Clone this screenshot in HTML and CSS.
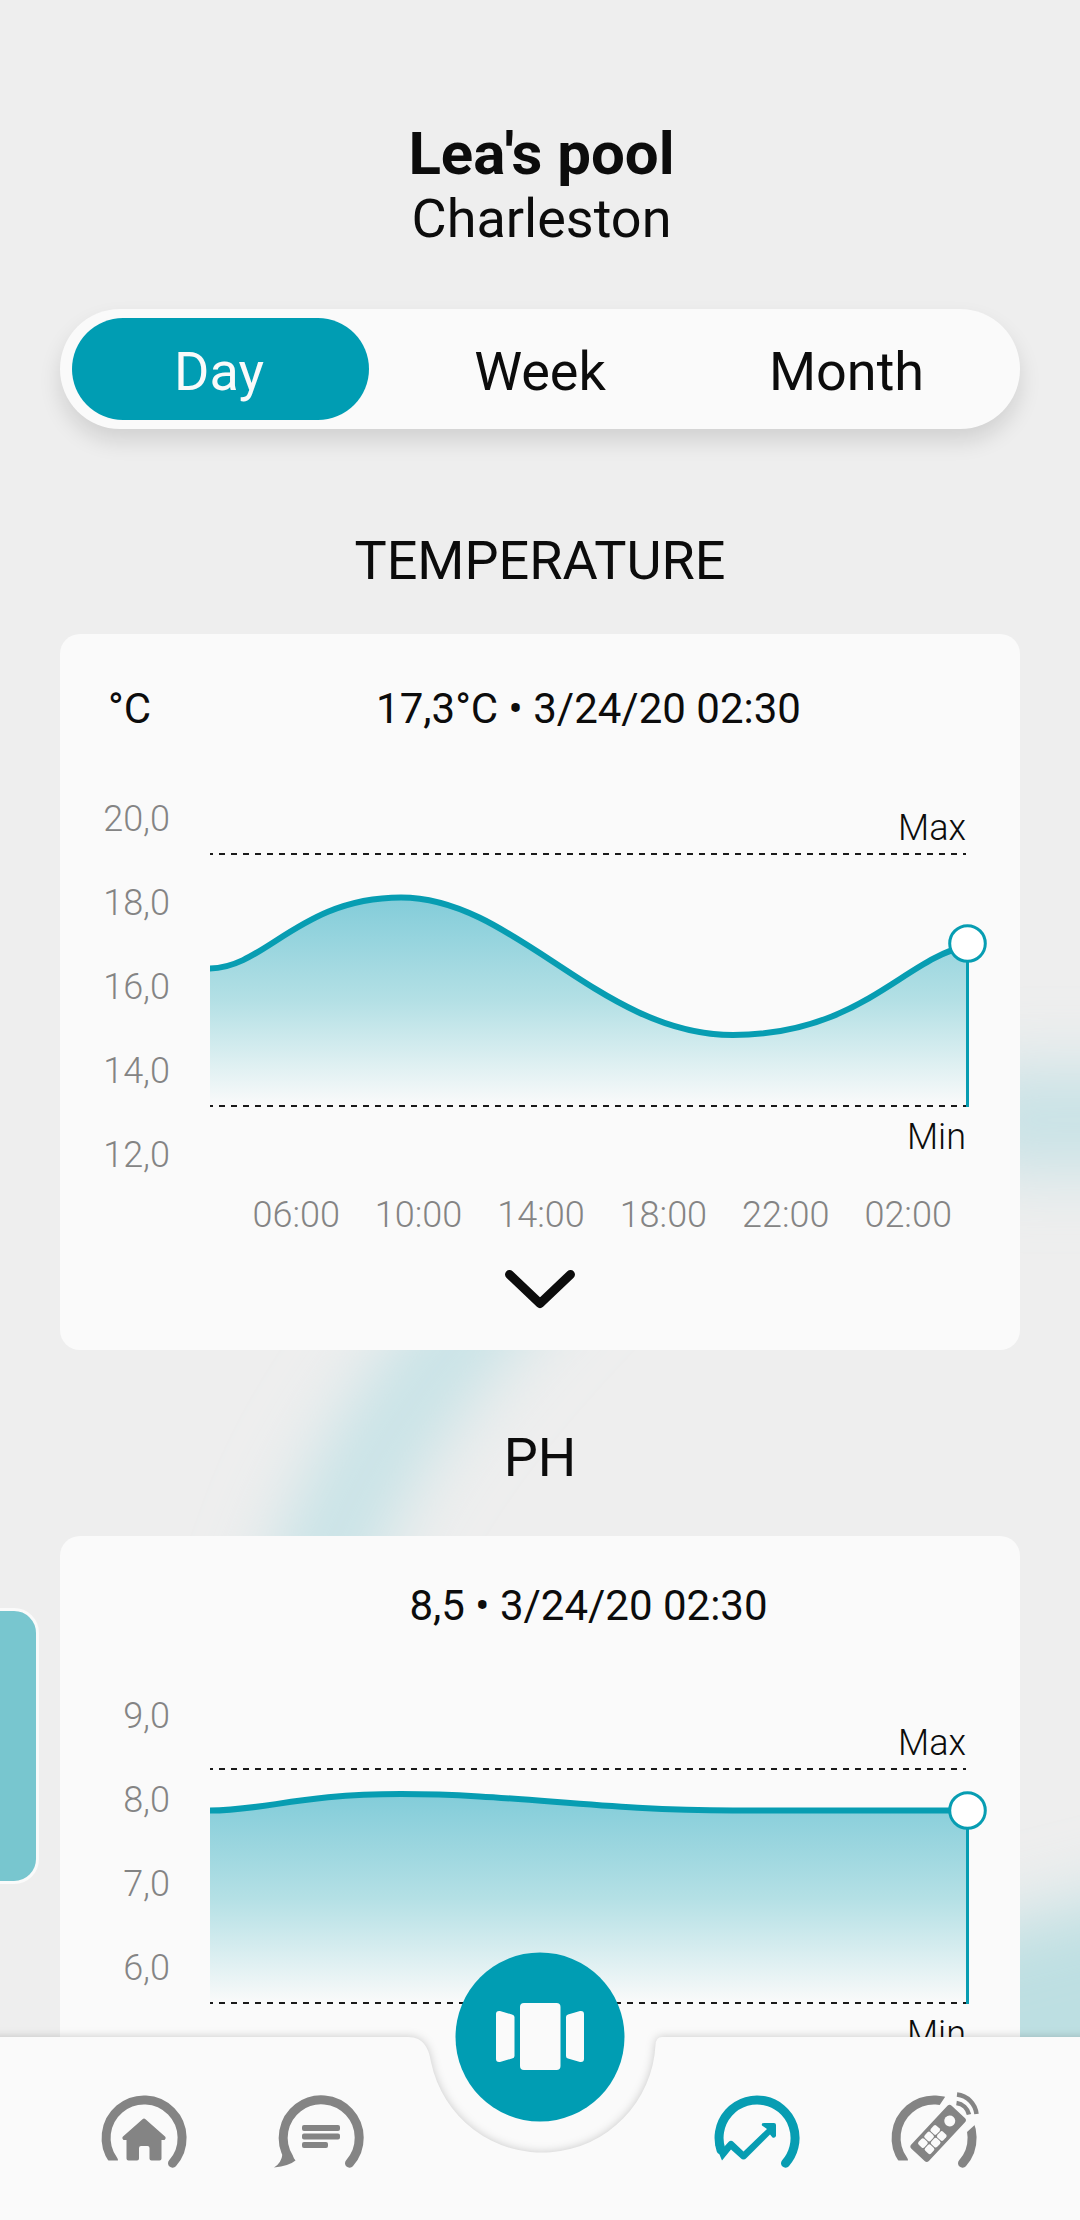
FILE: index.html
```html
<!DOCTYPE html>
<html lang="en">
<head>
<meta charset="utf-8">
<title>Lea's pool</title>
<link rel="stylesheet" href="styles.css">
</head>
<body>
<div class="app">
  <svg class="backdrop" viewBox="0 0 1080 2220" aria-hidden="true">
    <defs>
      <filter id="haze" filterUnits="userSpaceOnUse" x="-100" y="900" width="1500" height="1500"><feGaussianBlur stdDeviation="36"/></filter>
    </defs>
    <g filter="url(#haze)" fill="none" stroke-linecap="round">
      <path d="M600 1190Q400 1380 333 1536L260 1740" stroke-width="90" stroke="#c5e2e6"/>
      <path d="M990 1120H1200" stroke-width="94" stroke="#c5e1e5"/>
      <path d="M960 2060L1240 1990" stroke-width="240" stroke="#bddfe2"/>
    </g>
  </svg>
  <div class="drawer"></div>

  <header class="header">
    <h1 class="pool-name">Lea's pool</h1>
    <p class="pool-city">Charleston</p>
  </header>

  <div class="segments">
    <span class="segment segment-active">Day</span>
    <span class="segment">Week</span>
    <span class="segment segment-last">Month</span>
  </div>

  <h2 class="section-title">TEMPERATURE</h2>
  <section class="card">
    <div class="reading"><span class="unit">°C</span><span class="value">17,3°C • 3/24/20 02:30</span></div>
    <div class="chart">
      <div class="y-axis"><span>20,0</span><span>18,0</span><span>16,0</span><span>14,0</span><span>12,0</span></div>
      <svg class="plot" viewBox="210 776 810 420">
        <defs>
          <linearGradient id="fill-temp" gradientUnits="userSpaceOnUse" x1="0" y1="897" x2="0" y2="1106">
            <stop offset="0" stop-color="#82ccd9"/><stop offset=".5" stop-color="#b4e0e5"/><stop offset="1" stop-color="#fafafa"/>
          </linearGradient>
        </defs>
        <path fill="url(#fill-temp)" d="M210 968.5C265 968 300 897.5 401 897.5C515 897.5 600 1035 733 1035C860 1035 905 958 967 946V1106H210Z"/>
        <path class="limit" d="M210 854H966M210 1106H966"/>
        <path class="curve" d="M210 968.5C265 968 300 897.5 401 897.5C515 897.5 600 1035 733 1035C860 1035 905 958 967 946"/>
        <path class="cursor" d="M967.5 943V1107"/>
        <circle class="knob" cx="967.5" cy="943.5" r="17.8"/>
        <text class="limit-label" x="966" y="840">Max</text>
        <text class="limit-label" x="966" y="1148.5">Min</text>
      </svg>
    </div>
    <div class="x-axis"><span>06:00</span><span>10:00</span><span>14:00</span><span>18:00</span><span>22:00</span><span>02:00</span></div>
    <svg class="chevron" viewBox="0 0 72 40"><path d="M5.500 5.500L36 34.500L66.500 5.500"/></svg>
  </section>

  <h2 class="section-title section-title-ph">PH</h2>
  <section class="card card-ph">
    <div class="reading"><span class="unit"></span><span class="value">8,5 • 3/24/20 02:30</span></div>
    <div class="chart">
      <div class="y-axis"><span>9,0</span><span>8,0</span><span>7,0</span><span>6,0</span><span>5,0</span></div>
      <svg class="plot" viewBox="210 1673 810 420">
        <defs>
          <linearGradient id="fill-ph" gradientUnits="userSpaceOnUse" x1="0" y1="1794" x2="0" y2="2003">
            <stop offset="0" stop-color="#82ccd9"/><stop offset=".5" stop-color="#b4e0e5"/><stop offset="1" stop-color="#fafafa"/>
          </linearGradient>
        </defs>
        <path fill="url(#fill-ph)" d="M210 1810.500C265 1810.500 300 1794 401 1794C515 1794 600 1810.500 733 1810.500H967V2003H210Z"/>
        <path class="limit" d="M210 1769H966M210 2003H966"/>
        <path class="curve" d="M210 1810.500C265 1810.500 300 1794 401 1794C515 1794 600 1810.500 733 1810.500H967"/>
        <path class="cursor" d="M967.5 1810V2004"/>
        <circle class="knob" cx="967.5" cy="1810.500" r="17.8"/>
        <text class="limit-label" x="966" y="1755">Max</text>
        <text class="limit-label" x="966" y="2045.500">Min</text>
      </svg>
    </div>
  </section>

  <nav class="tabbar">
    <svg class="tabbar-shape" viewBox="0 1937 1080 283" aria-hidden="true">
      <defs>
        <filter id="lift" filterUnits="userSpaceOnUse" x="-40" y="1990" width="1160" height="280"><feGaussianBlur stdDeviation="5"/></filter>
      </defs>
      <path filter="url(#lift)" fill="#000" fill-opacity=".2" d="M-30 2037H408C424 2037 429 2049 431 2062A113.500 113.500 0 0 0 655.500 2045Q656 2037 662 2037H1110V2250H-30Z"/>
      <path fill="#fafafa" d="M0 2037H408C424 2037 429 2049 431 2062A113.500 113.500 0 0 0 655.500 2045Q656 2037 662 2037H1080V2220H0Z"/>
    </svg>
    <div class="tabs">
      <svg class="tab" viewBox="-50 -50 100 100">
        <path class="ring" d="M-30.500 22.500A38 38 0 1 1 28.500 25.200"/>
        <path class="cover" d="M-45 22.500H0V40H-45Z"/>
        <path class="solid" d="M-1.500 -18.800Q0 -20 1.500 -18.800L21 -1.500Q22.500 0 20.500 2H17.500V20.500Q17.500 22.500 15.500 22.500H7.500Q5.500 22.500 5.500 20.500V10Q5.500 8 3.500 8H-3Q-5 8 -5 10V20.500Q-5 22.500 -7 22.500H-15.500Q-17.500 22.500 -17.500 20.500V2H-20.500Q-22.500 0 -21 -1.500Z"/>
      </svg>
      <svg class="tab" viewBox="-50 -50 100 100">
        <path class="ring" d="M-32 20A38 38 0 1 1 28.500 25.200"/>
        <path class="solid" d="M-38.500 16L-30.500 15.500L-25.500 22.500Q-32 28 -47 29.500Q-39.500 25 -38.500 16Z"/>
        <path class="solid" d="M-17 -13H17Q19 -13 19 -11V-9Q19 -7 17 -7H-17Q-19 -7 -19 -9V-11Q-19 -13 -17 -13ZM-17 -4.500H17Q19 -4.500 19 -2.500V-.5Q19 1.500 17 1.500H-17Q-19 1.500 -19 -.5V-2.500Q-19 -4.500 -17 -4.500ZM-17 4H5Q7 4 7 6V8Q7 10 5 10H-17Q-19 10 -19 8V6Q-19 4 -17 4Z"/>
      </svg>
      <svg class="tab tab-active tab-chart" viewBox="-50 -50 100 100">
        <path class="ring" d="M-36 12A38 38 0 1 1 28.500 25.200"/>
        <path class="solid" d="M-41.500 7L-33 9L-28.500 4Q-26 1.500 -23.500 4L-13.500 13.500L10 -9L5 -12.500Q4 -15 7 -15H17Q19 -15 19 -13V-2Q18 .5 15.500 -.5L13 -3.500L-10.500 20Q-13.500 23 -16.500 20L-26 11.500L-35 22.500Z"/>
      </svg>
      <svg class="tab" viewBox="-50 -50 100 100">
        <path class="ring" d="M-30.500 22.500A38 38 0 1 1 28.500 25.200"/>
        <path class="cover" d="M-45 22.500H-18V40H-45ZM5 -32L13 -44L44 -44V-16L33 -6Z"/>
        <g transform="translate(4.500 -5) rotate(43)">
          <rect class="solid" x="-12" y="-29" width="24" height="59" rx="3"/>
          <circle class="hole" cx="0" cy="-16.500" r="5.500"/>
          <g class="hole"><rect x="-8.500" y="-4" width="8" height="8" rx="2"/><rect x=".5" y="-4" width="8" height="8" rx="2"/><rect x="-8.500" y="5" width="8" height="8" rx="2"/><rect x=".5" y="5" width="8" height="8" rx="2"/><rect x="-8.500" y="14" width="8" height="8" rx="2"/><rect x=".5" y="14" width="8" height="8" rx="2"/></g>
        </g>
        <path class="wave" d="M22.500 -35A15 15 0 0 1 35 -23.500M23 -43.500A22 22 0 0 1 42.500 -24"/>
      </svg>
    </div>
    <svg class="fab" viewBox="0 0 170 170">
      <circle cx="85" cy="85" r="84.500"/>
      <path fill="#fafafa" d="M69 51H101.500Q105.500 51 105.500 55V114Q105.500 118 101.500 118H69Q65 118 65 114V55Q65 51 69 51ZM45 59L57 62.500Q59.500 63 59.500 65V104Q59.500 106 57 106.500L45 110Q41 110.500 41 107V62Q41 58.500 45 59ZM125 59L113 62.500Q111 63 111 65V104Q111 106 113 106.500L125 110Q129 110.500 129 107V62Q129 58.500 125 59Z"/>
    </svg>
  </nav>
</div>
</body>
</html>
```
FILE: styles.css
```css
* { box-sizing: border-box; }

body {
  margin: 0;
  background: #eee;
  font-family: Roboto, sans-serif;
  color: #0c0c0c;
}

.app {
  position: relative;
  display: flex;
  flex-direction: column;
  width: 1080px;
  height: 2220px;
  padding: 0 60px;
  overflow: hidden;
}

.backdrop {
  position: absolute;
  inset: 0;
  width: 1080px;
  height: 2220px;
}

.drawer {
  position: absolute;
  left: -30px;
  top: 1608px;
  width: 69px;
  height: 276px;
  border: 3px solid #fafafa;
  border-radius: 25px;
  background: #78c6cf;
}

.header, .segments, .section-title, .card { position: relative; flex: none; }

.header { padding: 119px 0 0 3px; height: 309px; text-align: center; }
.pool-name { margin: 0; font-size: 60px; line-height: 70px; font-weight: 700; }
.pool-city { margin: 0; font-size: 54px; line-height: 60px; }

.segments {
  display: grid;
  grid-template-columns: 297px 1fr 297px;
  height: 120px;
  padding: 9px 12px;
  border-radius: 60px;
  background: #fafafa;
  box-shadow: 0 12px 22px rgba(0, 0, 0, .12);
}
.segment {
  display: flex;
  align-items: center;
  justify-content: center;
  padding-top: 4px;
  border-radius: 51px;
  font-size: 54px;
}
.segment-active { padding-right: 3px; background: #009db3; color: #fafafa; }
.segment-last { padding-right: 26px; }

.section-title {
  margin: 0;
  padding-top: 100px;
  height: 205px;
  text-align: center;
  font-size: 54px;
  line-height: 64px;
  font-weight: 400;
}
.section-title-ph { padding-top: 76px; height: 186px; }

.card {
  height: 716px;
  padding-top: 45px;
  border-radius: 20px;
  background: #fafafa;
}
.card-ph { padding-top: 40px; }

.reading { display: flex; height: 60px; font-size: 42px; line-height: 60px; }
.unit { width: 150px; padding-left: 48px; }
.value { flex: 1; padding-right: 53px; text-align: center; }

.chart { display: flex; height: 420px; margin-top: 37px; }
.y-axis {
  display: flex;
  flex-direction: column;
  width: 150px;
  padding: 1px 40px 0 0;
  text-align: right;
  color: #848484;
  font-size: 36px;
  font-weight: 300;
  line-height: 84px;
}
.plot { width: 810px; height: 420px; }
.limit { fill: none; stroke: #1a1a1a; stroke-width: 2; stroke-dasharray: 6 6; stroke-dashoffset: 3; }
.curve { fill: none; stroke: #079db2; stroke-width: 6; }
.cursor { fill: none; stroke: #079db2; stroke-width: 3; }
.knob { fill: #fff; stroke: #079db2; stroke-width: 3; }
.limit-label { font-size: 36px; font-weight: 300; text-anchor: end; fill: #0c0c0c; }

.x-axis {
  display: grid;
  grid-template-columns: repeat(6, 122.4px);
  margin-left: 175px;
  text-align: center;
  color: #848484;
  font-size: 36px;
  font-weight: 300;
  line-height: 38px;
}
.chevron { display: block; width: 72px; height: 40px; margin: 35px auto 0; }
.chevron path { fill: none; stroke: #0c0c0c; stroke-width: 9; stroke-linecap: round; stroke-linejoin: round; }

.tabbar {
  position: absolute;
  left: 0;
  bottom: 0;
  width: 1080px;
  height: 283px;
  padding-top: 151px;
}
.tabbar-shape { position: absolute; inset: 0; width: 1080px; height: 283px; }
.tabs {
  position: relative;
  display: grid;
  grid-template-columns: repeat(2, 177px) 1fr 177px 177px;
  padding: 0 57.500px 0 55px;
}
.tab { width: 100px; height: 100px; justify-self: center; }
.tab-chart { grid-column: 4; }
.ring { fill: none; stroke: #848484; stroke-width: 9; stroke-linecap: round; }
.solid { fill: #848484; }
.cover, .hole { fill: #fafafa; }
.wave { fill: none; stroke: #848484; stroke-width: 4.500; }
.tab-active .ring { stroke: #079db2; }
.tab-active .solid { fill: #079db2; }

.fab { position: absolute; left: 455px; top: 15px; width: 170px; height: 170px; fill: #009db3; }
```
